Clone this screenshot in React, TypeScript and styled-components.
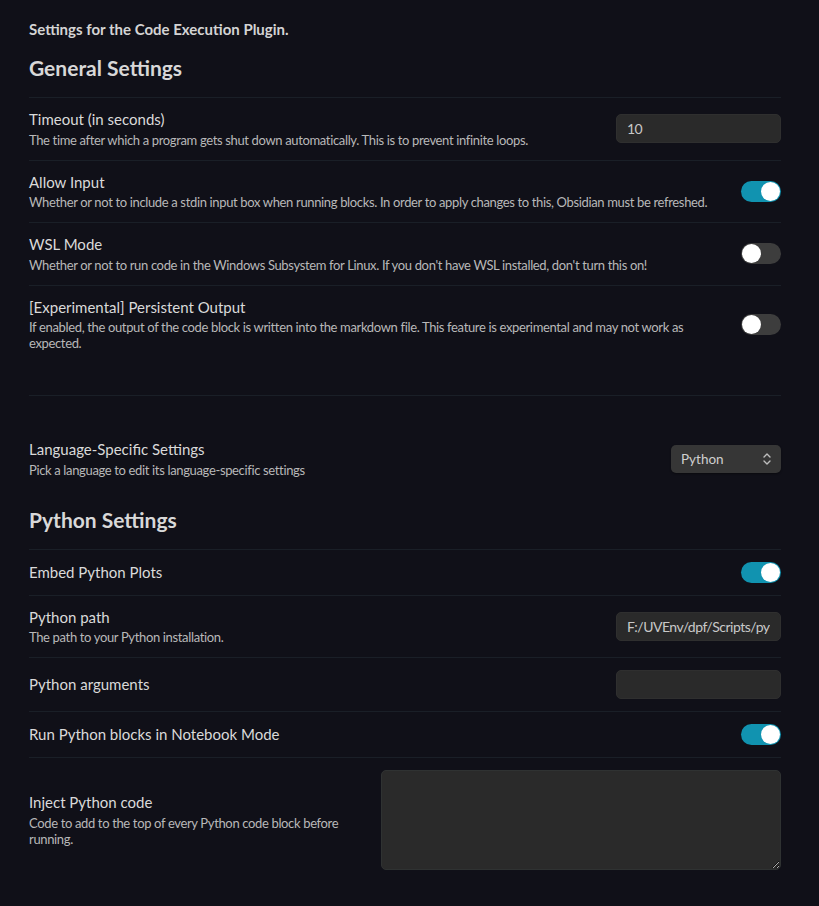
import React from 'react';
import styled, { createGlobalStyle } from 'styled-components';

const GlobalStyle = createGlobalStyle`
  html, body {
    margin: 0;
    padding: 0;
    background: #101018;
  }
  body {
    font-family: Lato, "Open Sans", sans-serif;
    color: #dadada;
  }
`;

const Page = styled.div`
  width: 752px;
  padding: 19px 38px 24px 29px;
  background: #101018;
  min-height: 906px;
  box-sizing: content-box;
`;

const Intro = styled.div`
  font-size: 15px;
  line-height: 20px;
  font-weight: 700;
  color: #d4d4d4;
`;

const Heading = styled.h3<{ $top: number }>`
  margin: ${p => p.$top}px 0 15px;
  font-size: 21px;
  line-height: 28px;
  font-weight: 700;
  color: #d8d8d8;
`;

const Item = styled.div<{ $noBorder?: boolean }>`
  display: flex;
  align-items: center;
  padding: 12px 0;
  border-top: ${p => (p.$noBorder ? '0' : '1px solid #1a1f27')};
`;

const Info = styled.div`
  flex: 1;
  margin-right: 24px;
`;

const Name = styled.div`
  font-size: 15px;
  line-height: 19px;
  color: #dadada;
`;

const Desc = styled.div`
  margin-top: 2.5px;
  font-size: 13px;
  line-height: 16px;
  letter-spacing: -0.35px;
  color: #b8b8b8;
`;

const Blank = styled.div`
  margin-top: 32px;
  height: 32px;
  border-top: 1px solid #1a1f27;
`;

const TextInput = styled.input<{ $width: number }>`
  width: ${p => p.$width}px;
  height: 29px;
  box-sizing: border-box;
  padding: 0 10px;
  background: #2a2a2a;
  border: 1px solid #2f2f2f;
  border-radius: 5px;
  color: #c8c8c8;
  font-family: inherit;
  font-size: 14px;
  letter-spacing: -0.5px;
  outline: none;
`;

const TextArea = styled.textarea`
  width: 400px;
  height: 100px;
  box-sizing: border-box;
  background: #2a2a2a;
  border: 1px solid #2f3232;
  border-radius: 5px;
  color: #c8c8c8;
  font-family: inherit;
  outline: none;
  color-scheme: dark;
`;

const Track = styled.div<{ $on: boolean }>`
  width: 40px;
  height: 21px;
  border-radius: 11px;
  background: ${p => (p.$on ? '#1193b0' : '#3d3d3d')};
  display: flex;
  align-items: center;
  justify-content: ${p => (p.$on ? 'flex-end' : 'flex-start')};
  padding: 0 1px;
  box-sizing: border-box;
  flex-shrink: 0;
`;

const Knob = styled.div`
  width: 19px;
  height: 19px;
  border-radius: 50%;
  background: #ffffff;
`;

const Select = styled.div`
  width: 110px;
  height: 28px;
  box-sizing: border-box;
  display: flex;
  align-items: center;
  justify-content: space-between;
  padding: 0 9px 0 10px;
  background: #363636;
  border-radius: 5px;
  font-size: 13.5px;
  color: #cfcfcf;
  box-shadow: 0 1px 2px rgba(0, 0, 0, 0.4);
`;

function Toggle({ on }: { on: boolean }) {
  return (
    <Track $on={on}>
      <Knob />
    </Track>
  );
}

function Setting({ name, desc, children, noBorder }: { name: string; desc?: string; children?: React.ReactNode; noBorder?: boolean }) {
  return (
    <Item $noBorder={noBorder}>
      <Info>
        <Name>{name}</Name>
        {desc && <Desc>{desc}</Desc>}
      </Info>
      {children}
    </Item>
  );
}

export default function App() {
  return (
    <Page>
      <GlobalStyle />
      <Intro>Settings for the Code Execution Plugin.</Intro>
      <Heading $top={15}>General Settings</Heading>

      <Setting name="Timeout (in seconds)" desc="The time after which a program gets shut down automatically. This is to prevent infinite loops.">
        <TextInput $width={165} defaultValue="10" />
      </Setting>
      <Setting name="Allow Input" desc="Whether or not to include a stdin input box when running blocks. In order to apply changes to this, Obsidian must be refreshed.">
        <Toggle on />
      </Setting>
      <Setting name="WSL Mode" desc="Whether or not to run code in the Windows Subsystem for Linux. If you don't have WSL installed, don't turn this on!">
        <Toggle on={false} />
      </Setting>
      <Setting name="[Experimental] Persistent Output" desc="If enabled, the output of the code block is written into the markdown file. This feature is experimental and may not work as expected.">
        <Toggle on={false} />
      </Setting>

      <Blank />

      <Setting noBorder name="Language-Specific Settings" desc="Pick a language to edit its language-specific settings">
        <Select>
          <span>Python</span>
          <svg width="10" height="14" viewBox="0 0 10 14" fill="none" stroke="#bdbdbd" strokeWidth="1.4" strokeLinecap="round" strokeLinejoin="round">
            <path d="M2 5 L5 2 L8 5" />
            <path d="M2 9 L5 12 L8 9" />
          </svg>
        </Select>
      </Setting>

      <Heading $top={16}>Python Settings</Heading>

      <Setting name="Embed Python Plots">
        <Toggle on />
      </Setting>
      <Setting name="Python path" desc="The path to your Python installation.">
        <TextInput $width={165} defaultValue="F:/UVEnv/dpf/Scripts/python.exe" />
      </Setting>
      <Setting name="Python arguments">
        <TextInput $width={165} defaultValue="" />
      </Setting>
      <Setting name="Run Python blocks in Notebook Mode">
        <Toggle on />
      </Setting>
      <Setting name="Inject Python code" desc="Code to add to the top of every Python code block before running.">
        <TextArea />
      </Setting>
    </Page>
  );
}
